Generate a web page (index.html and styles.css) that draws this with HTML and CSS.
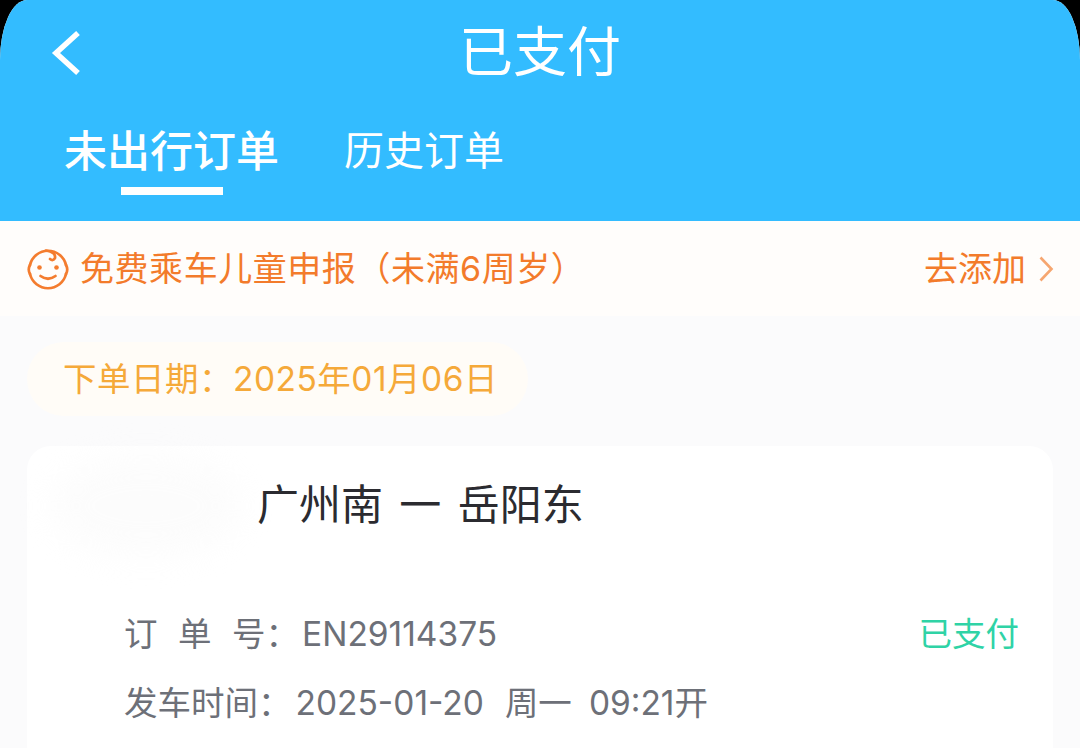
FILE: index.html
```html
<!DOCTYPE html>
<html lang="zh">
<head>
<meta charset="utf-8">
<title>已支付</title>
<link rel="stylesheet" href="styles.css">
</head>
<body>
<div class="screen">
  <header class="header">
    <div class="topbar">
      <svg class="back" viewBox="0 0 32 46" width="32" height="46"><path d="M28 3 L6 23 L28 43" fill="none" stroke="#fff" stroke-width="5.5"/></svg>
      <h1 class="title">已支付</h1>
    </div>
    <nav class="tabs">
      <div class="tab tab-active">未出行订单<span class="underline"></span></div>
      <div class="tab">历史订单</div>
    </nav>
  </header>
  <section class="notice">
    <svg class="baby" viewBox="0 0 44 44" width="44" height="44" fill="none" stroke="#f47c2e" stroke-width="2.700" stroke-linecap="round">
      <path d="M4 18 A18.500 18.500 0 0 1 40 18 M40 27 A18.500 18.500 0 0 1 4 27"/>
      <path d="M4 18 Q1.500 22.500 4 27 M40 18 Q42.500 22.500 40 27"/>
      <path d="M20 3.500 Q30 5 29 11 Q27 14.500 24 12"/>
      <path d="M14.500 29 Q22 34.500 29.500 29"/>
      <circle cx="13.500" cy="20.500" r="2.300" fill="#f47c2e" stroke="none"/>
      <circle cx="30.500" cy="20.500" r="2.300" fill="#f47c2e" stroke="none"/>
    </svg>
    <span class="notice-text">免费乘车儿童申报（未满6周岁）</span>
    <span class="notice-action">去添加</span>
    <svg class="chevron" viewBox="0 0 16 28" width="16" height="28"><path d="M2.500 2.500 L13.500 14 L2.500 25.500" fill="none" stroke="#f6a670" stroke-width="2.600"/></svg>
  </section>
  <main class="content">
    <div class="date-pill">下单日期：2025年01月06日</div>
    <article class="card">
      <div class="smudge"></div>
      <div class="route">广州南 一 岳阳东</div>
      <div class="row row-order">
        <span class="spread">订单</span><span>号：</span><span class="order-no">EN29114375</span>
        <span class="status">已支付</span>
      </div>
      <div class="row row-time">
        <span>发车时间：</span><span class="time-val">2025-01-20</span><span class="weekday">周一</span><span class="clock">09:21开</span>
      </div>
    </article>
  </main>
</div>
</body>
</html>
```

FILE: styles.css
```css
* { box-sizing: border-box; }
html, body { margin: 0; height: 100%; background: #000; }
body { font-family: Inter, "Noto Sans CJK SC", "Noto Sans", sans-serif; overflow: hidden; }
.screen {
  width: 1080px; height: 748px; overflow: hidden;
  background: #fbfbfc;
  border-radius: 27px 27px 0 0 / 60px 60px 0 0;
  display: flex; flex-direction: column;
}
.header { height: 221px; background: #33bcff; color: #fff; display: flex; flex-direction: column; flex: none; }
.topbar { position: relative; height: 104px; display: flex; align-items: flex-start; justify-content: center; }
.back { position: absolute; left: 50px; top: 30px; }
.title { margin: 0; font-size: 54px; font-weight: 400; line-height: 106px; }
.tabs { display: flex; padding-left: 64px; gap: 65px; align-items: flex-start; }
.tab { position: relative; font-size: 40px; line-height: 94px; white-space: nowrap; }
.tab-active { font-size: 43px; font-weight: 500; }
.underline { position: absolute; left: 57px; top: 83px; width: 102px; height: 8px; background: #fff; }
.notice { height: 95px; flex: none; background: #fffdfb; display: flex; align-items: center; padding: 0 26px 4px; color: #f37b2b; font-size: 34px; }
.baby { flex: none; margin: 4px 10px 0 0; }
.notice-text { white-space: nowrap; flex: 1; letter-spacing: .55px; }
.notice-action { white-space: nowrap; }
.chevron { flex: none; margin: 4px 0 0 12px; }
.content { flex: 1; padding: 26px 27px 0; display: flex; flex-direction: column; align-items: flex-start; }
.date-pill { width: 501px; height: 74px; border-radius: 37px; background: #fffcf7; color: #f5a939; font-size: 33.500px; line-height: 74px; padding-left: 36px; white-space: nowrap; letter-spacing: .5px; }
.card { position: relative; margin-top: 30px; width: 1026px; flex: 1; background: #fff; border-radius: 24px 24px 0 0; padding: 29px 34px 0 97px; }
.smudge { position: absolute; left: 24px; top: 10px; width: 190px; height: 100px; background: #f7f7f7; opacity: .35; filter: blur(16px); border-radius: 50%; }
.route { position: relative; margin-left: 133px; font-size: 42px; line-height: 60px; color: #2b2b30; white-space: nowrap; word-spacing: 4.500px; }
.row { display: flex; font-size: 33.500px; line-height: 48px; color: #6d7078; white-space: nowrap; }
.row-order { margin-top: 75px; }
.row-time { margin-top: 21px; }
.spread { letter-spacing: 20.500px; }
.order-no { margin-left: 3px; }
.status { margin-left: auto; color: #2fd3a6; }
.time-val { margin-left: 4px; }
.weekday { margin-left: 21px; }
.clock { margin-left: 17px; }
```
